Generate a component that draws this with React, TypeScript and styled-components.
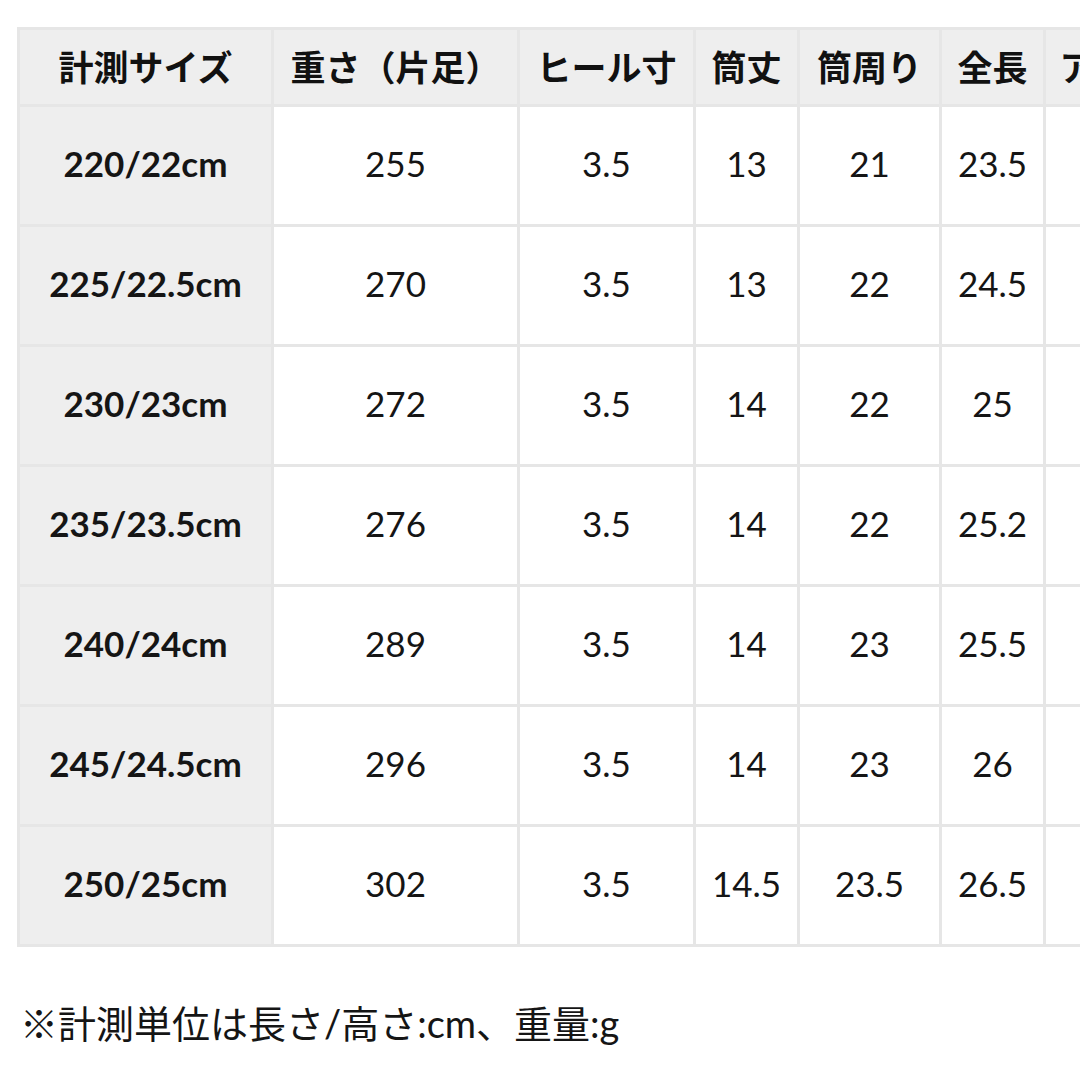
import React from 'react';
import styled, {createGlobalStyle} from "styled-components";

const GlobalStyle = createGlobalStyle`
  html, body {
    margin: 0;
    padding: 0;
    background: #ffffff;
    overflow: hidden;
  }
  body {
    font-family: Lato, "Noto Sans CJK JP", sans-serif;
    color: #151515;
  }
`

const columns = [
    {title: "計測サイズ", width: 254},
    {title: "重さ（片足）", width: 246},
    {title: "ヒール寸", width: 176},
    {title: "筒丈", width: 104},
    {title: "筒周り", width: 142},
    {title: "全長", width: 104},
    {title: "アウトソール", width: 240},
]

const rows = [
    ["220/22cm", "255", "3.5", "13", "21", "23.5", ""],
    ["225/22.5cm", "270", "3.5", "13", "22", "24.5", ""],
    ["230/23cm", "272", "3.5", "14", "22", "25", ""],
    ["235/23.5cm", "276", "3.5", "14", "22", "25.2", ""],
    ["240/24cm", "289", "3.5", "14", "23", "25.5", ""],
    ["245/24.5cm", "296", "3.5", "14", "23", "26", ""],
    ["250/25cm", "302", "3.5", "14.5", "23.5", "26.5", ""],
]

const tableWidth = columns.reduce((s, c) => s + c.width, 0)

export default function App() {
    return (
        <>
            <GlobalStyle/>
            <Page>
                <TableClip>
                    <SizeTable style={{width: tableWidth}}>
                        <colgroup>
                            {columns.map((c, i) => <col key={i} style={{width: c.width}}/>)}
                        </colgroup>
                        <thead>
                        <tr>
                            {columns.map((c, i) => <HeadCell key={i}>{c.title}</HeadCell>)}
                        </tr>
                        </thead>
                        <tbody>
                        {rows.map((r, i) => (
                            <tr key={i}>
                                {r.map((v, j) => (
                                    <Cell key={j} $label={j === 0}>{v}</Cell>
                                ))}
                            </tr>
                        ))}
                        </tbody>
                    </SizeTable>
                </TableClip>
                <Note>※計測単位は長さ/高さ:cm、重量:g</Note>
            </Page>
        </>
    );
}

const Page = styled.div`
  width: 1080px;
  height: 1080px;
  padding: 27px 0 0 17px;
  box-sizing: border-box;
  overflow: hidden;
`
const TableClip = styled.div`
  width: 1063px;
  overflow: hidden;
`
const SizeTable = styled.table`
  border-collapse: collapse;
  table-layout: fixed;
  border: 3px solid #e6e6e6;
`
const HeadCell = styled.th`
  height: 71px;
  padding: 0 0 3px;
  background: #eeeeee;
  border: 3px solid #e6e6e6;
  font-size: 35px;
  font-weight: 700;
  text-align: center;
  vertical-align: middle;
  white-space: nowrap;
  color: #111;
  overflow: hidden;
`
const Cell = styled.td<{ $label?: boolean }>`
  height: 111px;
  padding: 0 0 6px;
  background: ${p => p.$label ? "#eeeeee" : "#ffffff"};
  border: 3px solid #e6e6e6;
  font-size: 35px;
  font-weight: ${p => p.$label ? 700 : 400};
  text-align: center;
  vertical-align: middle;
  white-space: nowrap;
  color: #151515;
`
const Note = styled.p`
  margin: 54px 0 0 3px;
  font-size: 38px;
  line-height: 1.2;
  font-weight: 400;
  color: #151515;
`
